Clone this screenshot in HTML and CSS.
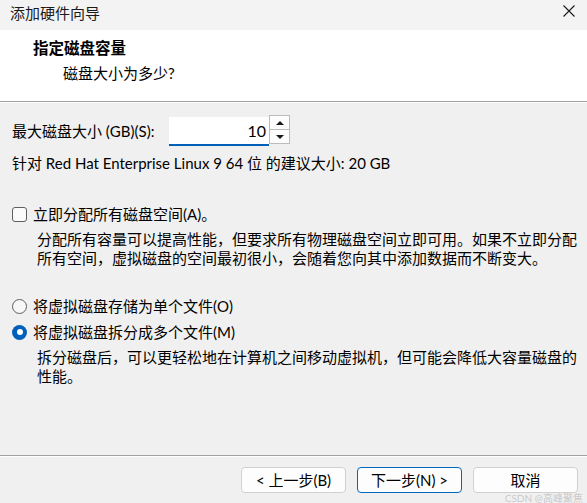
FILE: index.html
```html
<!DOCTYPE html>
<html lang="zh-CN">
<head>
<meta charset="utf-8">
<title>添加硬件向导</title>
<link rel="stylesheet" href="styles.css">
</head>
<body>
<div class="window">
  <div class="titlebar">
    <span class="title">添加硬件向导</span>
    <svg class="close" width="12" height="12" viewBox="0 0 12 12"><path d="M0.5 0.5 L11.5 11.5 M11.5 0.5 L0.5 11.5" stroke="#1a1a1a" stroke-width="1.1" fill="none"/></svg>
  </div>
  <div class="header">
    <div class="h-title">指定磁盘容量</div>
    <div class="h-sub">磁盘大小为多少?</div>
  </div>
  <div class="content">
    <div class="size-row">
      <span class="size-label">最大磁盘大小 (GB)(S):</span>
      <div class="spin">
        <div class="spin-input">10</div>
        <div class="spin-btns">
          <div class="spin-btn"><span class="tri-up"></span></div>
          <div class="spin-btn"><span class="tri-down"></span></div>
        </div>
      </div>
    </div>
    <div class="recommend">针对 Red Hat Enterprise Linux 9 64 位 的建议大小: 20 GB</div>
    <div class="option check-row">
      <span class="checkbox"></span>
      <span>立即分配所有磁盘空间(A)。</span>
    </div>
    <div class="desc desc-alloc">分配所有容量可以提高性能，但要求所有物理磁盘空间立即可用。如果不立即分配<br>所有空间，虚拟磁盘的空间最初很小，会随着您向其中添加数据而不断变大。</div>
    <div class="option radio-row first">
      <span class="radio"></span>
      <span>将虚拟磁盘存储为单个文件(O)</span>
    </div>
    <div class="option radio-row second">
      <span class="radio checked"></span>
      <span>将虚拟磁盘拆分成多个文件(M)</span>
    </div>
    <div class="desc desc-split">拆分磁盘后，可以更轻松地在计算机之间移动虚拟机，但可能会降低大容量磁盘的<br>性能。</div>
  </div>
  <div class="footer">
    <button class="btn">&lt; 上一步(B)</button>
    <button class="btn primary">下一步(N) &gt;</button>
    <button class="btn">取消</button>
  </div>
  <div class="watermark">CSDN @高峰聚焦</div>
</div>
</body>
</html>
```
FILE: styles.css
```css
html, body {
  margin: 0;
  padding: 0;
}
body {
  width: 587px;
  height: 503px;
  overflow: hidden;
  background: #f0f0f0;
  font-family: Lato, "Noto Sans CJK SC", sans-serif;
  font-size: 15px;
  color: #000;
}
.window {
  position: relative;
  width: 587px;
  height: 503px;
  display: flex;
  flex-direction: column;
}
.titlebar {
  height: 30px;
  flex: none;
  background: #f3f3f3;
  display: flex;
  align-items: center;
  justify-content: space-between;
  padding: 0 12px 0 10px;
  box-sizing: border-box;
}
.title {
  font-size: 15px;
  color: #1a1a1a;
  line-height: 20px;
  margin-top: -5px;
}
.close {
  margin-top: -8px;
}
.header {
  height: 72px;
  flex: none;
  background: #fff;
  border-bottom: 1px solid #a0a0a0;
  box-shadow: 0 1px 0 #ffffff;
  box-sizing: border-box;
  padding: 8px 0 0 33px;
}
.h-title {
  font-weight: bold;
  font-size: 15.5px;
  line-height: 20px;
}
.h-sub {
  font-size: 15px;
  line-height: 20px;
  margin: 5px 0 0 30px;
}
.content {
  flex: 1;
  padding: 13px 0 0 12px;
}
.size-row {
  display: flex;
  align-items: center;
  height: 31px;
}
.size-label {
  width: 157px;
  flex: none;
}
.spin {
  display: flex;
  align-items: flex-start;
  height: 31px;
}
.spin-input {
  width: 100px;
  height: 29px;
  margin-top: 2px;
  box-sizing: border-box;
  background: #fff;
  border-bottom: 2px solid #005fb8;
  text-align: right;
  padding-right: 3px;
  font-size: 16px;
  line-height: 27px;
}
.spin-btns {
  width: 21px;
  height: 29px;
  display: flex;
  flex-direction: column;
  border: 1px solid #bcbcbc;
  box-sizing: border-box;
  background: #fdfdfd;
}
.spin-btn {
  flex: 1;
  display: flex;
  align-items: center;
  justify-content: center;
}
.spin-btn + .spin-btn {
  border-top: 1px solid #bcbcbc;
}
.tri-up {
  width: 0;
  height: 0;
  border-left: 4px solid transparent;
  border-right: 4px solid transparent;
  border-bottom: 4px solid #1a1a1a;
}
.tri-down {
  width: 0;
  height: 0;
  border-left: 4px solid transparent;
  border-right: 4px solid transparent;
  border-top: 4px solid #1a1a1a;
}
.recommend {
  line-height: 20px;
  margin-top: 7px;
}
.option {
  display: flex;
  align-items: center;
  gap: 6px;
  line-height: 20px;
}
.check-row {
  margin-top: 31px;
}
.checkbox {
  width: 15px;
  height: 15px;
  box-sizing: border-box;
  border: 1px solid #5f5f5f;
  border-radius: 3px;
  background: #fbfbfb;
  flex: none;
}
.desc {
  margin-left: 25px;
  line-height: 19px;
}
.desc-alloc {
  margin-top: 6px;
}
.radio-row.first {
  margin-top: 28px;
}
.radio-row.second {
  margin-top: 6px;
}
.radio {
  width: 15px;
  height: 15px;
  box-sizing: border-box;
  border-radius: 50%;
  border: 1px solid #5f5f5f;
  background: #f7f7f7;
  flex: none;
}
.radio.checked {
  border: none;
  background: #005fb8;
  display: flex;
  align-items: center;
  justify-content: center;
}
.radio.checked::after {
  content: "";
  width: 6px;
  height: 6px;
  border-radius: 50%;
  background: #fff;
}
.desc-split {
  margin-top: 6px;
}
.footer {
  height: 48px;
  flex: none;
  border-top: 1px solid #a0a0a0;
  box-shadow: inset 0 1px 0 #ffffff;
  display: flex;
  justify-content: flex-end;
  align-items: flex-start;
  gap: 11px;
  padding: 11px 9px 0 0;
  box-sizing: border-box;
}
.btn {
  width: 105px;
  height: 26px;
  box-sizing: border-box;
  background: #fdfdfd;
  border: 1px solid #d0d0d0;
  border-radius: 4px;
  font-family: Lato, "Noto Sans CJK SC", sans-serif;
  font-size: 15px;
  color: #000;
  padding: 0;
  line-height: 16px;
}
.btn.primary {
  border-color: #0067c0;
}
.watermark {
  position: absolute;
  right: 4px;
  bottom: 0;
  font-size: 10px;
  line-height: 10px;
  color: rgba(120, 120, 120, 0.35);
}
```
